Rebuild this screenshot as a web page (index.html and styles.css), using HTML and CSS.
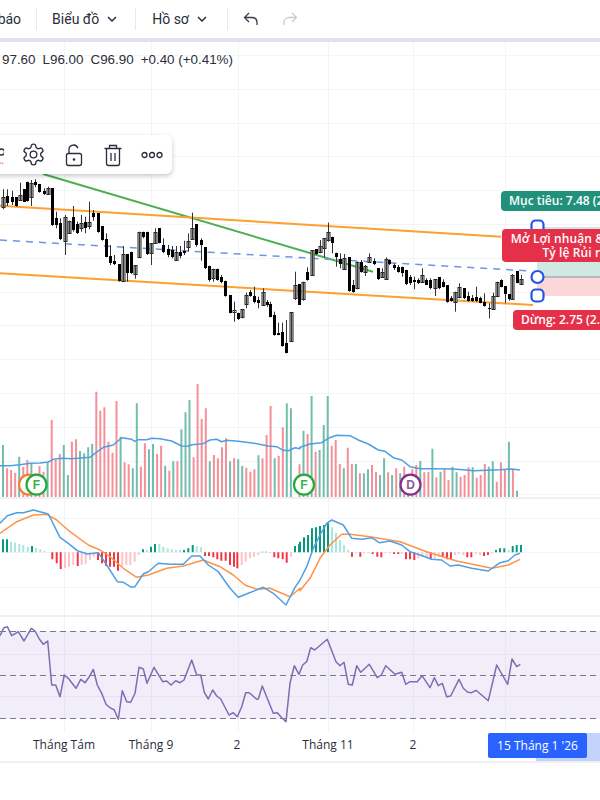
FILE: index.html
```html
<!DOCTYPE html>
<html lang="vi">
<head>
<meta charset="utf-8">
<title>Biểu đồ</title>
<link rel="stylesheet" href="styles.css">
</head>
<body>
<header class="topbar">
  <span class="menu menu-clipped">Cảnh báo</span>
  <i class="sep"></i>
  <span class="menu menu-chart">Biểu đồ
    <svg class="chev" width="10" height="6" viewBox="0 0 10 6"><path d="M1 1l4 4 4-4"/></svg>
  </span>
  <i class="sep"></i>
  <span class="menu menu-profile">Hồ sơ
    <svg class="chev" width="10" height="6" viewBox="0 0 10 6"><path d="M1 1l4 4 4-4"/></svg>
  </span>
  <i class="sep"></i>
  <svg class="hist undo" width="16" height="14" viewBox="0 0 16 14"><path d="M6 1L1.500 5.500 6 10M1.500 5.500H9c3 0 5 2 5 5v2.500"/></svg>
  <svg class="hist redo" width="16" height="14" viewBox="0 0 16 14"><path d="M10 1l4.500 4.500L10 10M14.500 5.500H7c-3 0-5 2-5 5v2.500"/></svg>
</header>

<main class="chart">
  <svg id="plot" class="plot" width="600" height="721" viewBox="0 42 600 721"></svg>

  <div class="legend"><span>97.60</span><span>L96.00</span><span>C96.90</span><span>+0.40 (+0.41%)</span></div>

  <div class="floating">
    <svg class="ico" width="22" height="24" viewBox="0 0 22 24"><circle cx="19.500" cy="9" r="3"/><path class="wave" d="M14 19.500l2 1.500 2-1.500 2 1.500 2-1.500"/></svg>
    <svg class="ico" width="25" height="25" viewBox="0 0 24 24"><path d="M12.220 2h-.44a2 2 0 0 0-2 2v.18a2 2 0 0 1-1 1.730l-.43.25a2 2 0 0 1-2 0l-.15-.08a2 2 0 0 0-2.730.73l-.22.38a2 2 0 0 0 .73 2.730l.15.1a2 2 0 0 1 1 1.720v.51a2 2 0 0 1-1 1.740l-.15.09a2 2 0 0 0-.73 2.730l.22.38a2 2 0 0 0 2.730.73l.15-.08a2 2 0 0 1 2 0l.43.25a2 2 0 0 1 1 1.730V20a2 2 0 0 0 2 2h.44a2 2 0 0 0 2-2v-.18a2 2 0 0 1 1-1.730l.43-.25a2 2 0 0 1 2 0l.15.08a2 2 0 0 0 2.730-.73l.22-.39a2 2 0 0 0-.73-2.730l-.15-.08a2 2 0 0 1-1-1.740v-.5a2 2 0 0 1 1-1.740l.15-.09a2 2 0 0 0 .73-2.730l-.22-.38a2 2 0 0 0-2.730-.73l-.15.08a2 2 0 0 1-2 0l-.43-.25a2 2 0 0 1-1-1.730V4a2 2 0 0 0-2-2z"/><circle cx="12" cy="12" r="3.200"/></svg>
    <svg class="ico" width="22" height="24" viewBox="0 0 22 24"><rect x="3.500" y="10.500" width="15" height="12" rx="2"/><path d="M6 10.500V6.500a4.500 4.500 0 0 1 8.800-1.300"/><circle class="solid" cx="11" cy="16.500" r="1.300"/></svg>
    <svg class="ico" width="22" height="24" viewBox="0 0 22 24"><path d="M2.500 5.500h17M7.500 5.500V2.500h7v3M4.500 5.500v15a2 2 0 0 0 2 2h9a2 2 0 0 0 2-2v-15M9 10v8M13 10v8"/></svg>
    <svg class="ico" width="22" height="8" viewBox="0 0 22 8"><circle cx="3.500" cy="4" r="2.500"/><circle cx="11" cy="4" r="2.500"/><circle cx="18.500" cy="4" r="2.500"/></svg>
  </div>

  <div class="tag tag-target">Mục tiêu: 7.48 (2.54%)</div>
  <div class="tag tag-open">Mở Lợi nhuận &amp; Lỗ: 0.00 (0)<br>Tỷ lệ Rủi ro: 1.82</div>
  <div class="tag tag-stop">Dừng: 2.75 (2.54%)</div>

  <div class="axis">
    <span class="tick tick-aug">Tháng Tám</span>
    <span class="tick tick-sep">Tháng 9</span>
    <span class="tick tick-2a">2</span>
    <span class="tick tick-nov">Tháng 11</span>
    <span class="tick tick-2b">2</span>
    <i class="range"></i>
    <span class="cursor">15 Tháng 1 '26</span>
  </div>
</main>
<script src="chart.js"></script>
</body>
</html>
```
FILE: styles.css
```css
* { box-sizing: border-box; }
html, body { margin: 0; height: 100%; }
body {
  background: #fff;
  overflow: hidden;
  font-family: "Liberation Sans", Arial, sans-serif;
  color: #131722;
}
.topbar {
  display: flex;
  align-items: center;
  height: 42px;
  border-bottom: 4px solid #e0e3eb;
  background: #fff;
  font-family: Roboto, "Liberation Sans", sans-serif;
}
.menu {
  display: inline-flex;
  align-items: center;
  font-size: 14px;
  color: #2a2e39;
  white-space: nowrap;
}
.menu-clipped { margin-left: -38px; margin-right: 15px; }
.menu-chart { margin: 0 18px 0 15px; }
.menu-profile { margin: 0 20px 0 16px; }
.chev { margin-left: 8px; fill: none; stroke: #2a2e39; stroke-width: 1.500; }
.sep { width: 1px; height: 22px; background: #e7e9ee; flex: none; }
.hist { fill: none; stroke-width: 1.300; flex: none; }
.undo { margin-left: 15px; stroke: #3a3e49; }
.redo { margin-left: 23px; stroke: #c9cbd1; }

.chart { position: relative; height: 721px; overflow: hidden; }
.plot { display: block; }

.legend {
  position: absolute;
  left: 2px;
  top: 10px;
  display: flex;
  gap: 7px;
  font-size: 13.400px;
  line-height: 16px;
  white-space: nowrap;
  color: #2a2e39;
}

.floating {
  position: absolute;
  left: -30px;
  top: 93px;
  width: 202px;
  height: 39px;
  padding-left: 12px;
  display: flex;
  align-items: center;
  gap: 17px;
  background: #fff;
  border-radius: 6px;
  box-shadow: 0 2px 5px rgba(0, 0, 0, .22);
}
.ico { flex: none; fill: none; stroke: #2a2e39; stroke-width: 1.300; }
.ico .solid { fill: #2a2e39; stroke: none; }
.ico .wave { stroke: #e58a92; stroke-dasharray: 1.500 1; }

.tag {
  position: absolute;
  color: #fff;
  font-family: "Open Sans", sans-serif;
  font-size: 12px;
  font-weight: 600;
  white-space: nowrap;
  border-radius: 4px;
}
.tag-target { left: 501px; top: 149px; width: 140px; height: 20px; padding-left: 8px; line-height: 20px; background: #22917c; }
.tag-open { left: 502px; top: 187px; width: 177px; height: 33px; line-height: 14px; padding-top: 3px; text-align: center; letter-spacing: .1px; background: #e5304a; }
.tag-stop { left: 513px; top: 268px; width: 120px; height: 20px; padding-left: 8px; line-height: 20px; background: #e5304a; }

.axis { position: absolute; left: 0; right: 0; top: 691px; height: 28px; font-family: "Open Sans", sans-serif; font-size: 12px; color: #2a2e39; }
.tick { position: absolute; top: 4px; line-height: 16px; transform: translateX(-50%); white-space: nowrap; }
.tick-aug { left: 64px; }
.tick-sep { left: 151px; }
.tick-2a { left: 237px; }
.tick-nov { left: 328px; }
.tick-2b { left: 413px; }
.range { position: absolute; left: 536px; right: 0; top: 0; bottom: 0; background: #c3d3fb; }
.cursor { position: absolute; left: 488px; top: 0; width: 99px; height: 25px; line-height: 25px; text-align: center; color: #fff; background: #2962ff; border-radius: 2px; white-space: nowrap; }
```
FILE: chart.js
```js
const NS = 'http://www.w3.org/2000/svg';
const svg = document.getElementById('plot');
function el(tag, attrs, text) {
  const n = document.createElementNS(NS, tag);
  for (const k in attrs) n.setAttribute(k, attrs[k]);
  if (text) n.textContent = text;
  svg.appendChild(n);
  return n;
}
const f = v => +v.toFixed(1);
// coordinates below are read at 3x from crops with an origin of (ox, oy)
function line(segs, color, w) {
  let d = '';
  for (const [ox, oy, p] of segs) {
    for (let i = 0; i < p.length; i += 2) {
      d += (d ? 'L' : 'M') + f(ox + p[i] / 3) + ' ' + f(oy + p[i + 1] / 3);
    }
  }
  el('path', { d, fill: 'none', stroke: color, 'stroke-width': w, 'stroke-linejoin': 'round' });
}

// grid
let grid = '';
[64.5, 151.5, 238.5, 328.5, 413.5, 505.5].forEach(x => { grid += `M${x} 42V732`; });
for (let i = 0; i < 14; i++) grid += `M0 ${Math.round(55 + i * 33.8) + .5}H600`;
[552.5, 587.5, 518.5].forEach(y => { grid += `M0 ${y}H600`; });
[654.5, 696.5].forEach(y => { grid += `M0 ${y}H600`; });
el('path', { d: grid, stroke: '#f3f4f6', 'stroke-width': 1, fill: 'none' });

// RSI band
el('rect', { x: 0, y: 631, width: 600, height: 88, fill: '#7e57c2', 'fill-opacity': .1 });
el('path', { d: 'M0 631.500H600M0 675.500H600M0 718.500H600', stroke: '#787b86', 'stroke-width': 1, 'stroke-dasharray': '6 4', fill: 'none' });

// pane dividers
el('path', { d: 'M0 498H600M0 616H600M0 762H600', stroke: '#eef0f4', 'stroke-width': 2 });

// risk zones
el('rect', { x: 537, y: 227, width: 63, height: 50, fill: '#cfe8e2' });
el('rect', { x: 537, y: 277, width: 63, height: 19, fill: '#fbd7da' });
el('path', { d: 'M537 277H600', stroke: '#8f9299', 'stroke-width': 1 });

// trend lines
el('path', { d: 'M43 174L373 271.700', stroke: '#4caf50', 'stroke-width': 2, fill: 'none' });
el('path', { d: 'M0 240L530 271', stroke: '#6f93e6', 'stroke-width': 1.500, 'stroke-dasharray': '7 6', fill: 'none' });

// candles: x, bodyTop, bodyBottom, high, low, hollow
const A = [[10,80,110,58,118,1],[22,78,98,58,108,0],[35,82,95,62,105,0],[47,82,108,82,110,0],[60,75,90,38,93,1],[72,58,95,58,95,0],[82,35,92,35,95,0],[94,40,80,30,108,1],[106,35,45,28,52,0],[118,42,65,42,68,0],[131,62,72,55,75,0],[144,55,72,50,75,1],[156,55,165,55,168,0],[168,145,165,125,175,0],[181,160,208,145,210,0],[194,142,212,135,255,1],[207,152,188,152,190,1],[219,142,180,108,185,0],[231,162,190,155,192,0],[244,158,175,135,185,1],[256,155,175,140,190,0],[268,155,168,95,178,1],[280,128,140,120,152,0],[294,130,185,130,188,0],[306,168,210,168,212,0],[318,208,260,190,262,0],[331,258,278,225,285,0],[343,272,282,255,285,0],[356,282,333,282,335,0],[368,252,333,228,335,1],[381,252,308,252,335,0],[393,245,308,245,312,0],[405,286,312,286,326,1],[417,185,260,185,262,1],[430,185,200,185,205,0],[441,185,252,185,255,0],[453,220,248,220,285,1],[465,185,220,175,222,1],[478,175,218,175,220,0],[490,225,246,205,250,0],[503,238,255,225,262,0],[515,240,262,228,265,0],[527,246,270,228,272,1],[540,245,258,228,265,0],[552,242,250,212,255,0],[564,212,232,190,245,1],[577,175,208,128,210,1],[589,162,225,162,230,0],[602,210,225,205,272,0],[614,232,295,232,297,0],[627,287,330,287,335,0],[639,296,325,296,335,1],[652,296,330,296,332,0],[664,320,335,315,340,0],[676,332,378,332,380,0],[689,375,428,375,430,0],[701,420,425,395,455,1],[713,428,448,428,450,0],[725,418,442,418,445,1],[738,375,403,368,415,1],[750,365,378,360,380,0],[763,378,397,350,400,0],[775,390,400,380,415,0],[788,365,405,355,408,1],[800,395,405,390,410,0],[810,403,440,395,442,0],[822,435,495,425,497,0],[835,488,494,458,496,0],[847,485,527,458,530,0],[859,518,548,450,550,0],[872,427,513,427,516,1],[885,345,384,305,390,1],[897,342,405,342,405,0]];
const B = [[8,335,388,335,392,1],[22,305,330,292,332,0],[35,240,316,240,318,1],[47,238,252,238,255,0],[59,228,245,210,250,1],[72,205,235,205,262,1],[84,185,210,158,215,1],[97,200,220,200,250,0],[109,248,262,248,290,0],[121,268,282,250,295,0],[133,265,297,252,300,1],[146,262,362,262,365,0],[158,345,365,330,368,0],[171,275,355,275,358,1],[183,275,305,270,308,0],[196,288,305,285,318,1],[208,262,275,250,278,1],[221,272,282,265,285,0],[233,295,328,295,330,0],[245,305,320,295,322,1],[258,268,327,262,330,1],[268,270,282,268,285,0],[281,285,295,280,300,0],[293,290,305,285,308,0],[306,292,308,290,320,0],[318,300,342,300,345,0],[330,322,340,315,345,0],[342,330,335,320,358,0],[354,330,338,325,342,0],[366,315,335,295,338,1],[379,330,345,325,345,0],[391,330,355,325,358,0],[404,328,355,328,378,1],[416,322,355,322,358,0],[428,335,350,328,352,0],[441,345,395,345,398,0],[453,385,392,378,395,0],[466,365,395,365,425,1],[478,350,380,340,385,1],[491,355,385,355,388,0],[503,378,392,365,395,0],[516,385,392,375,395,0],[528,380,392,350,395,0],[541,385,398,380,400,0],[553,395,408,370,410,0],[566,415,418,400,445,0],[578,378,418,368,420,1],[590,335,378,335,380,1],[603,330,350,328,352,0],[615,348,372,348,400,0],[627,372,388,372,392,0],[637,315,388,312,390,1],[650,303,338,303,340,0],[662,326,342,315,345,1]];
function candles(list, ox, oy) {
  let wick = '', solid = '';
  for (const [x, t, b, h, l, hollow] of list) {
    const cx = Math.round(ox + x / 3) + .5;
    const top = Math.round(oy + t / 3), bot = Math.round(oy + b / 3);
    wick += `M${cx} ${f(oy + h / 3)}V${f(oy + l / 3)}`;
    if (hollow) {
      el('rect', { class: 'c', x: cx - 1.5, y: top + .5, width: 3, height: Math.max(bot - top, 1), fill: '#e4e4e4', stroke: '#222', 'stroke-width': 1 });
    } else {
      solid += `M${cx - 1.5} ${top}h3V${Math.max(bot, top + 1)}h-3z`;
    }
  }
  el('path', { d: wick, stroke: '#333', 'stroke-width': 1, fill: 'none' });
  el('path', { d: solid, fill: '#000' });
}

// orange channel goes under the candles' wicks at some points: drawn first
el('path', { d: 'M0 205.800L501 236.700', stroke: '#ff9f2e', 'stroke-width': 2, fill: 'none' });
el('path', { d: 'M0 273.300L533 305', stroke: '#ff9f2e', 'stroke-width': 2, fill: 'none' });
candles(A, 0, 170);
candles(B, 300, 170);

// volume: top in crop px, colour flag (1 = green)
const V1 = [225,1,295,0,300,0,308,0,260,1,290,0,270,0,280,1,310,0,288,0,305,0,275,1,150,0,270,0,252,0,225,1,315,1,215,0,208,0,243,1,250,1,232,1,222,1,65,0,122,0,112,0,215,0,248,0,93,0,200,1,277,0,283,0,295,1,100,1,290,0,220,0,238,1,222,1,252,0,227,0,287,1,302,0,274,1,274,0,178,1,127,1,90,1,262,0,42,0,147,0,115,0,274,1,255,0,265,0,232,0,205,0,274,1,265,0,268,1,288,1,293,0,305,0,298,0,256,1,265,0,195,0,108,0,265,1,258,0,172,0,100,1,115,1];
const V2 = [283,0,182,1,192,0,78,1,245,0,240,1,165,1,78,1,227,0,210,0,282,0,295,1,233,0,282,0,282,1,310,0,310,1,298,1,285,0,305,0,315,1,265,1,307,0,315,1,295,0,310,1,290,0,343,1,298,0,285,0,273,1,307,0,305,0,236,1,322,0,305,1,297,0,330,0,290,1,307,1,320,0,315,0,292,0,292,1,323,0,315,0,282,0,290,1,274,1,335,0,277,0,300,0,215,1,298,0,362,1];
function vols(v, x0, dx) {
  let g = '', r = '';
  for (let i = 0; i < v.length; i += 2) {
    const x = f(x0 + (i / 2) * dx), y = f(370 + v[i] / 3);
    if (v[i + 1]) g += `M${x} 497V${y}`; else r += `M${x} 497V${y}`;
  }
  el('path', { d: r, stroke: '#f58f98', 'stroke-width': 2, fill: 'none' });
  el('path', { d: g, stroke: '#72bdae', 'stroke-width': 2, fill: 'none' });
}
vols(V1, 3, 4.055);
vols(V2, 299.500, 221.500 / 55);
line([[0, 370, [0,287,30,287,60,284,90,280,120,279,145,276,160,268,185,265,215,266,270,262,285,250,310,232,340,225,365,203,395,208,405,214,415,209,440,209,455,205,480,206,515,213,545,228,565,229,575,224,610,221,630,210,650,208,665,215,680,211,715,214,770,221,805,228,830,230,850,241,865,242,885,233,900,236]],
      [300, 370, [0,232,30,222,65,218,85,205,110,196,150,197,175,210,205,222,235,240,255,244,280,263,305,270,330,290,360,296,400,296,460,297,500,300,520,302,600,299,635,297,660,300]]], '#4f9fe3', 1.500);

// markers
function marker(cx, cy, ring, letter, ink) {
  el('circle', { cx, cy, r: 10, fill: '#fff', stroke: ring, 'stroke-width': 2.200 });
  if (letter) el('text', { x: cx, y: cy + 4.500, 'text-anchor': 'middle', 'font-family': 'Liberation Sans, sans-serif', 'font-size': 12, 'font-weight': 700, fill: ink }, letter);
}
marker(29, 484.700, '#f57c3b');
marker(36.500, 484.700, '#22ab3c', 'F', '#37b24d');
marker(304, 484.700, '#22ab3c', 'F', '#37b24d');
marker(410.500, 484.700, '#862e89', 'D', '#8a5a9a');

// MACD histogram: x in crop px, end y in crop px, colour
const base = 552.300;
const H = { '#089981': [[0,[9,118,21,118,96,138,429,148,453,140,465,132,552,150,565,145,578,135,787,155,798,155,885,138,897,133]],[300,[0,125,12,112,24,105,36,85,48,82,60,78,72,75,84,70,588,150,600,145,613,145,638,138,650,135,663,135]]],
  '#ace5dc': [[0,[33,125,45,128,58,132,70,135,83,140,108,143,121,148,133,153,146,155,441,150,478,132,490,140,503,145,515,148,528,150,540,150,590,138,603,142]],[300,[96,82,108,98,120,120,132,135,144,150,626,150]]],
  '#f23645': [[0,[157,178,170,190,182,207,233,198,294,180,306,190,318,198,330,200,342,200,354,212,615,168,627,168,640,172,652,178,664,182,677,182,690,195,702,200,712,205,823,172,835,175,848,178,860,188]],[300,[156,170,181,170,218,162,232,170,244,172,282,162,295,162,318,178,330,178,343,180,392,178,428,172,441,178,453,180,502,172,514,172,552,168,564,165]]],
  '#fcc4c8': [[0,[195,205,207,200,220,195,245,195,257,192,270,180,282,170,367,198,379,195,391,195,404,185,416,165,725,195,737,185,750,175,762,170,775,165,810,160,873,170]],[300,[168,160,193,160,205,160,256,160,270,160,305,162,355,175,367,170,380,172,404,175,416,170,465,165,477,162,490,165,527,162,540,165,576,160]]] };
for (const color in H) {
  let d = '';
  for (const [ox, p] of H[color]) {
    for (let i = 0; i < p.length; i += 2) d += `M${f(ox + p[i] / 3)} ${base}V${f(500 + p[i + 1] / 3)}`;
  }
  el('path', { d, stroke: color, 'stroke-width': 2, fill: 'none' });
}
line([[0, 500, [0,100,50,65,100,45,140,43,170,60,210,95,265,135,300,150,330,170,370,205,410,232,445,225,500,205,550,198,610,180,660,200,700,225,735,255,770,268,810,265,870,290,900,265]],
      [300, 500, [0,272,30,235,60,175,90,135,125,103,150,103,210,110,300,125,380,155,470,183,575,205,625,195,660,178]]], '#ff9348', 1.500);
line([[0, 500, [0,70,22,47,50,38,70,38,100,30,120,35,145,42,180,112,205,130,232,152,262,162,295,158,320,195,352,245,370,247,395,262,405,260,430,222,445,215,475,190,510,193,550,193,575,168,600,168,625,195,655,215,690,265,715,292,745,280,790,262,820,280,858,315,885,262,900,240]],
      [300, 500, [0,240,20,200,40,145,60,105,80,70,95,60,130,75,155,115,185,118,215,113,238,128,270,123,305,135,330,155,360,165,395,178,425,180,450,198,475,195,515,205,565,213,600,188,625,182,645,165,660,160]]], '#4f9fe3', 1.500);

// RSI
line([[0, 615, [0,62,12,38,22,35,35,62,47,55,55,50,72,78,94,40,105,48,118,72,130,88,143,78,155,210,167,210,180,245,193,180,205,190,228,220,242,193,255,203,268,185,280,163,292,210,305,235,318,268,330,278,343,285,355,313,367,227,380,260,392,262,405,235,417,157,430,162,441,205,462,157,488,200,500,198,513,210,527,197,540,203,552,195,575,135,590,180,602,180,613,232,625,252,638,225,650,243,662,252,687,300,700,293,712,305,725,275,737,233,748,233,770,253,775,252,787,213,820,295,832,293,845,308,858,320,870,205,883,152,897,178]],
      [300, 615, [0,170,8,150,20,140,32,98,44,105,82,73,108,140,120,152,132,142,145,208,157,210,170,152,182,172,208,148,232,188,244,180,257,152,285,178,305,172,317,208,330,200,352,200,366,182,390,218,403,188,415,212,427,205,440,245,452,243,477,193,490,220,503,232,515,233,528,226,565,257,590,150,623,208,636,132,650,155,661,148]]], '#7d6db3', 1.500);

// handles of the position tool
[[537.5, 226.500, 4], [537.5, 277, 6], [537.5, 295.500, 4]].forEach(([x, y, r]) => {
  el('rect', { x: x - 6, y: y - 6, width: 12, height: 12, rx: r, fill: '#fff', stroke: '#2255e6', 'stroke-width': 2.200 });
});
```
